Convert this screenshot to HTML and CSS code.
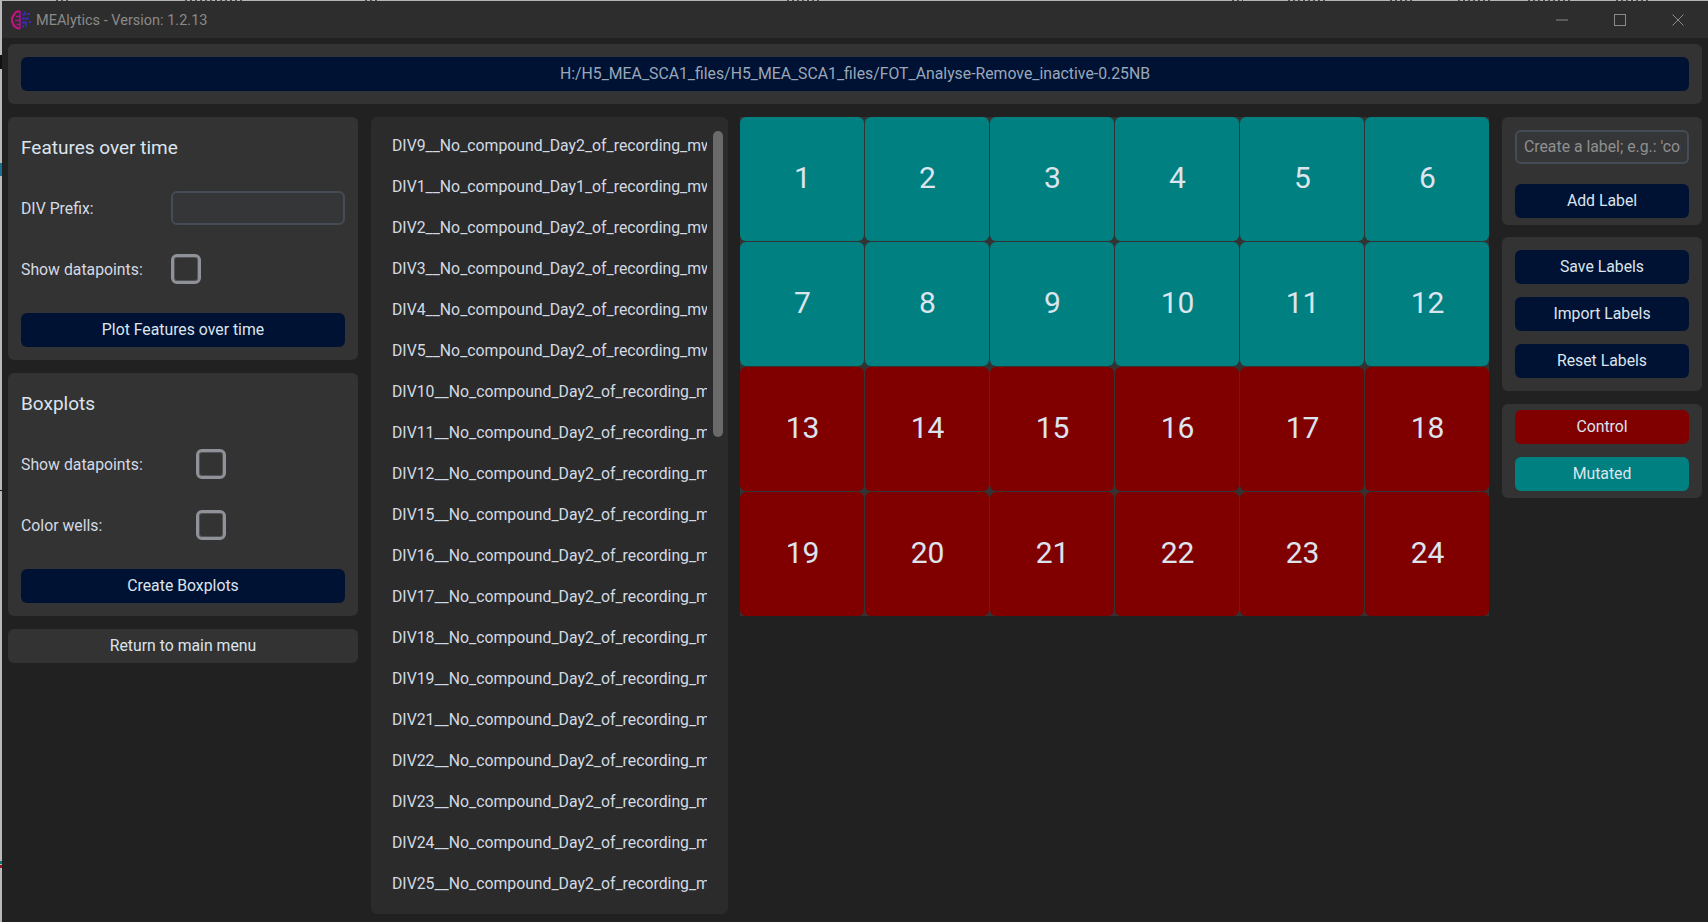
FILE: index.html
```html
<!DOCTYPE html>
<html lang="en">
<head>
<meta charset="utf-8">
<title>MEAlytics - Version: 1.2.13</title>
<link rel="stylesheet" href="styles.css">
</head>
<body>
<div class="window">
  <span class="edge-top"></span>
  <span class="tick tick-a"></span>
  <span class="tick tick-b"></span>
  <span class="tick tick-c"></span>
  <span class="tick tick-d"></span>
  <span class="tick tick-e"></span>
  <header class="titlebar">
    <svg class="logo" viewBox="0 0 20 20" width="20" height="20" aria-hidden="true">
      <path d="M9 1.500C6 1 3.500 2.500 3 5 .8 6.500 .3 11 1.800 13c.5 3 3.700 5.500 7.200 5.500" fill="none" stroke="#c4127f" stroke-width="2.200"/>
      <path d="M9 1v18" stroke="#a3168a" stroke-width="1.500"/>
      <path d="M5 6.500h4M4 10.500h5M5.500 14.500h3.500" stroke="#b3148a" stroke-width="1.500"/>
      <path d="M11 4.500h3v-3M11 8.500h7M11 12.500h4v4M11 16.500h2" fill="none" stroke="#3a2bb0" stroke-width="1.800"/>
      <path d="M16 4h3M18 12h2" stroke="#3a2bb0" stroke-width="1.800"/>
    </svg>
    <span class="title">MEAlytics - Version: 1.2.13</span>
    <div class="controls">
      <svg class="ctl ctl-min" viewBox="0 0 12 12" width="12" height="12" aria-hidden="true"><path d="M0 6h12" stroke="#8a8a8a" fill="none"/></svg>
      <svg class="ctl ctl-max" viewBox="0 0 12 12" width="12" height="12" aria-hidden="true"><rect x=".5" y=".5" width="11" height="11" stroke="#8a8a8a" fill="none"/></svg>
      <svg class="ctl ctl-close" viewBox="0 0 12 12" width="12" height="12" aria-hidden="true"><path d="M.5 .5l11 11M11.500 .5l-11 11" stroke="#8a8a8a" fill="none"/></svg>
    </div>
  </header>

  <main class="content">
    <section class="frame path-frame">
      <button class="btn navy">H:/H5_MEA_SCA1_files/H5_MEA_SCA1_files/FOT_Analyse-Remove_inactive-0.25NB</button>
    </section>

    <div class="columns">
      <aside class="left">
        <section class="frame panel">
          <h2 class="heading">Features over time</h2>
          <div class="row">
            <label class="label label-a">DIV Prefix:</label>
            <input class="entry entry-wide" type="text">
          </div>
          <div class="row">
            <label class="label label-a">Show datapoints:</label>
            <span class="check"></span>
          </div>
          <button class="btn navy panel-btn">Plot Features over time</button>
        </section>

        <section class="frame panel">
          <h2 class="heading">Boxplots</h2>
          <div class="row">
            <label class="label label-b">Show datapoints:</label>
            <span class="check"></span>
          </div>
          <div class="row">
            <label class="label label-b">Color wells:</label>
            <span class="check"></span>
          </div>
          <button class="btn navy panel-btn">Create Boxplots</button>
        </section>

        <button class="btn return">Return to main menu</button>
      </aside>

      <section class="list-panel">
        <ul class="files">
          <li>DIV9__No_compound_Day2_of_recording_mwd.h5</li>
          <li>DIV1__No_compound_Day1_of_recording_mwd.h5</li>
          <li>DIV2__No_compound_Day2_of_recording_mwd.h5</li>
          <li>DIV3__No_compound_Day2_of_recording_mwd.h5</li>
          <li>DIV4__No_compound_Day2_of_recording_mwd.h5</li>
          <li>DIV5__No_compound_Day2_of_recording_mwd.h5</li>
          <li>DIV10__No_compound_Day2_of_recording_mwd.h5</li>
          <li>DIV11__No_compound_Day2_of_recording_mwd.h5</li>
          <li>DIV12__No_compound_Day2_of_recording_mwd.h5</li>
          <li>DIV15__No_compound_Day2_of_recording_mwd.h5</li>
          <li>DIV16__No_compound_Day2_of_recording_mwd.h5</li>
          <li>DIV17__No_compound_Day2_of_recording_mwd.h5</li>
          <li>DIV18__No_compound_Day2_of_recording_mwd.h5</li>
          <li>DIV19__No_compound_Day2_of_recording_mwd.h5</li>
          <li>DIV21__No_compound_Day2_of_recording_mwd.h5</li>
          <li>DIV22__No_compound_Day2_of_recording_mwd.h5</li>
          <li>DIV23__No_compound_Day2_of_recording_mwd.h5</li>
          <li>DIV24__No_compound_Day2_of_recording_mwd.h5</li>
          <li>DIV25__No_compound_Day2_of_recording_mwd.h5</li>
        </ul>
        <div class="scroll-thumb"></div>
      </section>

      <section class="wells">
        <div class="well teal">1</div><div class="well teal">2</div><div class="well teal">3</div><div class="well teal">4</div><div class="well teal">5</div><div class="well teal">6</div>
        <div class="well teal">7</div><div class="well teal">8</div><div class="well teal">9</div><div class="well teal">10</div><div class="well teal">11</div><div class="well teal">12</div>
        <div class="well red">13</div><div class="well red">14</div><div class="well red">15</div><div class="well red">16</div><div class="well red">17</div><div class="well red">18</div>
        <div class="well red">19</div><div class="well red">20</div><div class="well red">21</div><div class="well red">22</div><div class="well red">23</div><div class="well red">24</div>
      </section>

      <aside class="right">
        <section class="frame side side-add">
          <input class="entry" type="text" placeholder="Create a label; e.g.: 'control'">
          <button class="btn navy add-btn">Add Label</button>
        </section>
        <section class="frame side side-save">
          <button class="btn navy">Save Labels</button>
          <button class="btn navy">Import Labels</button>
          <button class="btn navy">Reset Labels</button>
        </section>
        <section class="frame side side-groups">
          <button class="btn red">Control</button>
          <button class="btn teal">Mutated</button>
        </section>
      </aside>
    </div>
  </main>
</div>
</body>
</html>
```

FILE: styles.css
```css
* { box-sizing: border-box; }
html, body { margin: 0; height: 100%; }
body {
  background: #212121;
  font-family: Roboto, "Liberation Sans", sans-serif;
  color: #dce4ee;
  overflow: hidden;
}
.window {
  position: relative;
  height: 922px;
  border-left: 2px solid #b9b9b9;
  border-top: 1px solid #b4b4b4;
  background: #212121;
  display: flex;
  flex-direction: column;
}
.edge-top {
  position: absolute;
  top: -1px;
  left: -2px;
  width: 1708px;
  height: 1px;
  --speck: repeating-linear-gradient(90deg, #4a4a4a 0 2px, transparent 2px 5px);
  background:
    var(--speck) 56px 0 / 14px 1px no-repeat,
    var(--speck) 185px 0 / 60px 1px no-repeat,
    var(--speck) 365px 0 / 13px 1px no-repeat,
    var(--speck) 787px 0 / 33px 1px no-repeat,
    var(--speck) 1232px 0 / 11px 1px no-repeat,
    var(--speck) 1288px 0 / 38px 1px no-repeat,
    var(--speck) 1390px 0 / 23px 1px no-repeat,
    var(--speck) 1458px 0 / 32px 1px no-repeat,
    var(--speck) 1528px 0 / 42px 1px no-repeat,
    var(--speck) 1616px 0 / 34px 1px no-repeat;
}
.tick {
  position: absolute;
  left: -2px;
  width: 2px;
}
.tick-a { top: 54px; height: 14px; background: #111111; }
.tick-b { top: 162px; height: 13px; background: #1b6f8f; }
.tick-c { top: 489px; height: 1px; background: #111111; }
.tick-d { top: 860px; height: 3px; background: #007a7a; }
.tick-e { top: 864px; height: 3px; background: #a01020; }
.titlebar {
  height: 37px;
  flex: none;
  background: #2d2d2d;
  display: flex;
  align-items: center;
  padding-left: 9px;
}
.logo { flex: none; margin-top: 1px; }
.title {
  margin-left: 5px;
  margin-top: 1px;
  font-size: 14.5px;
  color: #8a8a8a;
}
.controls {
  margin-left: auto;
  display: flex;
  align-items: center;
}
.ctl { flex: none; }
.ctl-min { margin-right: 46px; }
.ctl-max { margin-right: 46px; }
.ctl-close { margin-right: 24px; }

.content {
  flex: 1;
  padding: 6px 6px 8px 6px;
  display: flex;
  flex-direction: column;
  gap: 13px;
}
.frame {
  background: #333333;
  border-radius: 6px;
}
.path-frame {
  height: 60px;
  padding: 13px;
  display: flex;
}
.btn {
  display: block;
  width: 100%;
  height: 34px;
  border: 0;
  border-radius: 6px;
  padding: 0 0 2px;
  font: 400 15.8px Roboto, "Liberation Sans", sans-serif;
  color: #dce4ee;
  text-align: center;
  flex: none;
}
.navy { background: #001233; }
.path-frame .btn { color: #9aa7ba; flex: 1; width: auto; }
.btn.red, .well.red { background: #800000; }
.btn.teal, .well.teal { background: #008080; }

.columns {
  flex: 1;
  display: flex;
  align-items: flex-start;
  gap: 13px;
  min-height: 0;
}
.left {
  width: 350px;
  flex: none;
  display: flex;
  flex-direction: column;
  gap: 13px;
}
.panel { padding: 13px; display: flex; flex-direction: column; gap: 27px; }
.heading {
  margin: 0;
  height: 34px;
  line-height: 35px;
  font-size: 19px;
  font-weight: 400;
  color: #dce4ee;
}
.row {
  display: flex;
  align-items: center;
  height: 34px;
}
.label { font-size: 15.8px; color: #d3dae4; flex: none; }
.label-a { width: 150px; }
.label-b { width: 175px; }
.entry {
  height: 34px;
  width: 100%;
  border: 2px solid #454c55;
  border-radius: 6px;
  background: #343638;
  padding: 0 6px 2px 7px;
  font: 400 15.8px Roboto, "Liberation Sans", sans-serif;
  color: #dce4ee;
  outline: none;
  flex: none;
}
.entry::placeholder { color: #8f8f8f; opacity: 1; }
.entry-wide { width: 174px; }
.check {
  display: block;
  width: 30px;
  height: 30px;
  border: 3px solid #8f9399;
  border-radius: 6px;
  box-shadow: inset 0 0 0 1px rgba(143, 147, 153, .35);
  flex: none;
}
.return { background: #333333; color: #dce4ee; }

.list-panel {
  position: relative;
  width: 357px;
  height: 797px;
  flex: none;
  background: #2b2b2b;
  border-radius: 6px;
  padding: 8px 21px 0 21px;
}
.files {
  list-style: none;
  margin: 0;
  padding: 0;
}
.files li {
  height: 41px;
  line-height: 41px;
  font-size: 15.8px;
  color: #d3dae4;
  white-space: nowrap;
  overflow: hidden;
}
.scroll-thumb {
  position: absolute;
  top: 14px;
  right: 5px;
  width: 10px;
  height: 306px;
  background: #6a6a6a;
  border-radius: 5px;
}
.wells {
  flex: none;
  margin-left: -1px;
  background: #333333;
  display: grid;
  grid-template-columns: repeat(6, 124px);
  grid-template-rows: repeat(4, 124px);
  gap: 1px;
}
.well {
  border-radius: 6px;
  display: flex;
  align-items: center;
  justify-content: center;
  padding: 0 0 3px 1px;
  font-size: 30px;
  color: #dce4ee;
}
.right {
  width: 200px;
  flex: none;
  display: flex;
  flex-direction: column;
  gap: 12px;
}
.side { padding: 13px; display: flex; flex-direction: column; }
.side-add { height: 108px; gap: 20px; }
.side-save { height: 154px; gap: 13px; }
.side-groups { height: 94px; padding-top: 6px; gap: 13px; margin-top: 1px; }
```
